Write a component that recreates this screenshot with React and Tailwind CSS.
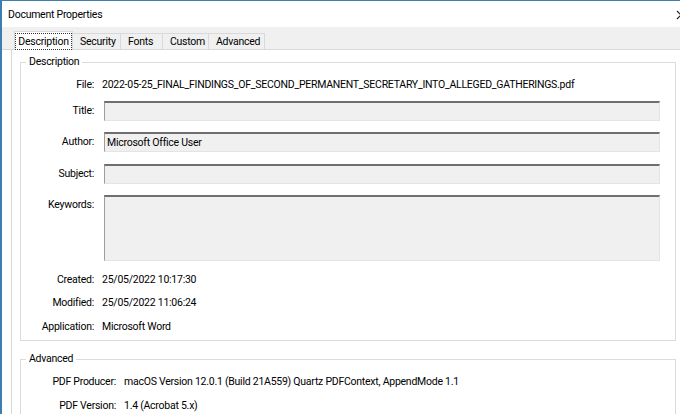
export default function App() {
  const tabs = [
    { label: "Description", w: "w-[59px]", active: true },
    { label: "Security", w: "w-[48px]" },
    { label: "Fonts", w: "w-[42px]" },
    { label: "Custom", w: "w-[46px]" },
    { label: "Advanced", w: "w-[56px]" },
  ];

  const Input = ({ h = "h-[20px]", value }) => (
    <div
      className={`ml-[2px] w-[556px] ${h} bg-[#f0f0f0] border-t-2 border-t-[#6f6f6f] border-l border-l-[#9c9c9c] border-r border-r-[#e4e4e4] border-b border-b-[#e4e4e4] pl-[2px] leading-[18px]`}
    >
      {value}
    </div>
  );

  return (
    <div className="w-[680px] h-[414px] overflow-hidden bg-white border-t border-l-2 border-[#3c7fae] font-['Roboto',sans-serif] text-[10.5px] tracking-[-0.25px] text-black">
      {/* title bar */}
      <div className="h-[26px] flex items-center pl-[6px] pt-[1px]">
        <span>Document Properties</span>
        <svg className="ml-auto -mr-[6px]" width="10" height="10" viewBox="0 0 10 10">
          <path d="M1 1 L9 9 M9 1 L1 9" stroke="#222" strokeWidth="1.2" fill="none" />
        </svg>
      </div>

      {/* tab strip */}
      <div className="h-[23px] bg-[#f0f0f0] border-b border-[#d9d9d9] flex items-end pl-[12px]">
        {tabs.map((t) =>
          t.active ? (
            <div
              key={t.label}
              className={`${t.w} h-[19px] -mb-px bg-white border border-b-0 border-[#d9d9d9] flex items-start justify-center pt-[1px]`}
            >
              <span className="border border-dotted border-[#333] px-[2px] leading-[15px]">{t.label}</span>
            </div>
          ) : (
            <div
              key={t.label}
              className={`${t.w} h-[16px] bg-[#f0f0f0] border border-b-0 border-l-0 border-[#d9d9d9] pl-[7px] leading-[16px]`}
            >
              {t.label}
            </div>
          )
        )}
      </div>

      {/* tab page */}
      <div className="ml-[9px] border-l border-[#d9d9d9] h-[400px] pl-[8px] pt-[12px]">
        {/* Description group */}
        <div className="w-[656px] border border-[#dcdcdc] pb-[3px]">
          <div className="w-fit ml-[5px] px-[3px] -mt-[9px] bg-white leading-[16px]">Description</div>

          <div className="mt-[5px] h-[20px] flex items-center">
            <div className="w-[73px] text-right">File:</div>
            <div className="ml-[8px] whitespace-nowrap">2022-05-25_FINAL_FINDINGS_OF_SECOND_PERMANENT_SECRETARY_INTO_ALLEGED_GATHERINGS.pdf</div>
          </div>
          <div className="mt-[6px] flex items-center">
            <div className="w-[73px] text-right">Title:</div>
            <div className="ml-[8px]"><Input /></div>
          </div>
          <div className="mt-[11px] flex items-center">
            <div className="w-[73px] text-right">Author:</div>
            <div className="ml-[8px]"><Input value="Microsoft Office User" /></div>
          </div>
          <div className="mt-[12px] flex items-center">
            <div className="w-[73px] text-right">Subject:</div>
            <div className="ml-[8px]"><Input /></div>
          </div>
          <div className="mt-[11px] flex items-start">
            <div className="w-[73px] text-right leading-[20px]">Keywords:</div>
            <div className="ml-[8px]"><Input h="h-[66px]" /></div>
          </div>
          <div className="mt-[9px] h-[20px] flex items-center">
            <div className="w-[73px] text-right">Created:</div>
            <div className="ml-[8px]">25/05/2022 10:17:30</div>
          </div>
          <div className="mt-[3px] h-[20px] flex items-center">
            <div className="w-[73px] text-right">Modified:</div>
            <div className="ml-[8px]">25/05/2022 11:06:24</div>
          </div>
          <div className="mt-[4px] h-[20px] flex items-center">
            <div className="w-[73px] text-right">Application:</div>
            <div className="ml-[8px]">Microsoft Word</div>
          </div>
        </div>

        {/* Advanced group */}
        <div className="mt-[18px] w-[656px] h-[80px] border border-[#dcdcdc]">
          <div className="w-fit ml-[5px] px-[3px] -mt-[9px] bg-white leading-[16px]">Advanced</div>
          <div className="mt-[5px] h-[20px] flex items-center">
            <div className="w-[95px] text-right">PDF Producer:</div>
            <div className="ml-[8px]">macOS Version 12.0.1 (Build 21A559) Quartz PDFContext, AppendMode 1.1</div>
          </div>
          <div className="mt-[4px] h-[20px] flex items-center">
            <div className="w-[95px] text-right">PDF Version:</div>
            <div className="ml-[8px]">1.4 (Acrobat 5.x)</div>
          </div>
        </div>
      </div>
    </div>
  );
}
